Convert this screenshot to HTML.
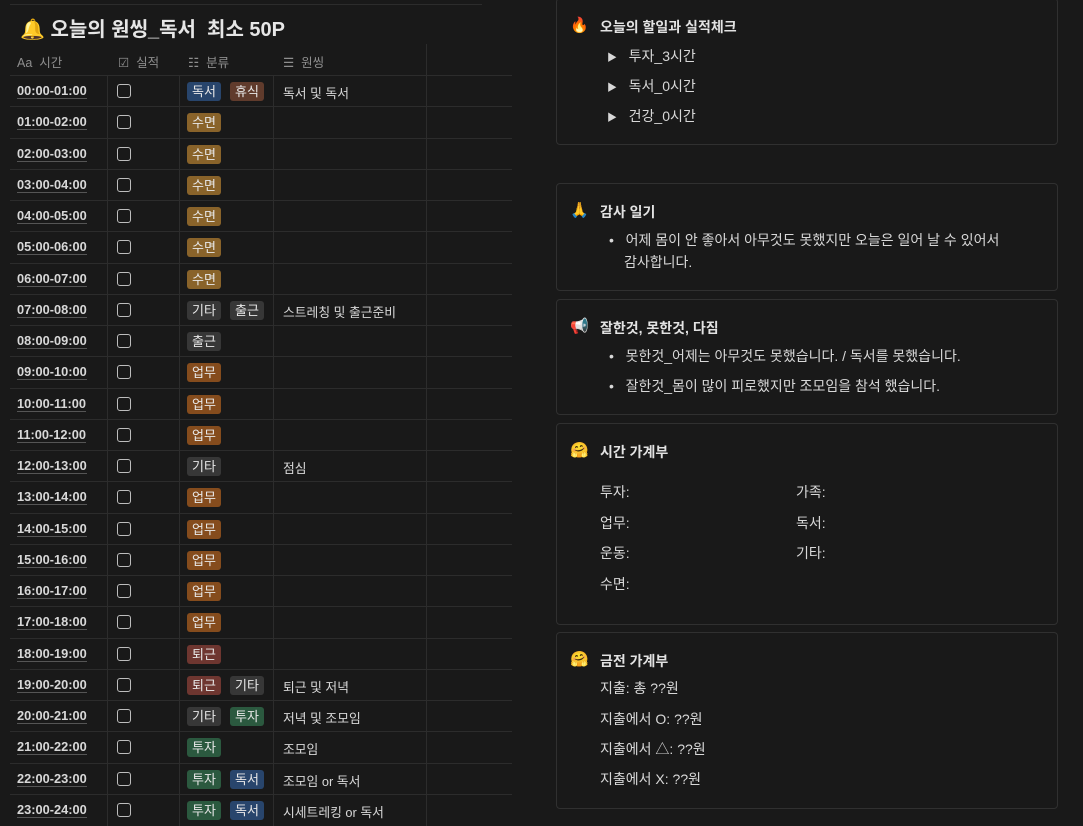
<!DOCTYPE html>
<html><head><meta charset="utf-8">
<style>
*{margin:0;padding:0;box-sizing:border-box}
body{width:1083px;height:826px;background:#191919;overflow:hidden;position:relative;font-family:"Liberation Sans","Noto Sans CJK KR",sans-serif;color:#d4d4d4;font-size:13px}
.a{position:absolute;white-space:nowrap}
.title{left:20px;top:13px;font-size:20px;font-weight:bold;color:#e6e6e6}
.hd{top:52px;color:#8e8e8e;font-size:12.5px}
.row{position:absolute;left:10px;width:502px;height:31.25px;border-top:1px solid #2c2c2c}
.t{position:absolute;left:7px;top:7px;font-weight:bold;font-size:12.8px;color:#d8d8d8;border-bottom:1px solid #555;line-height:15px}
.cb{position:absolute;left:107px;top:8px;width:14px;height:14px;border:1.5px solid #bdbdbd;border-radius:3px}
.tg{position:absolute;top:6px;height:19px;line-height:19px;padding:0 5px;border-radius:3px;font-size:13px;color:#e8e8e8}
.tg1{left:177px}.tg2{left:220px}
.w{position:absolute;left:273px;top:7px;font-size:12.8px;color:#d8d8d8}
.vl{position:absolute;width:1px;background:#2c2c2c}
.b{background:#28456c}.br{background:#603b2c}.s{background:#89632a}.g{background:#373737}.o{background:#854c1d}.r{background:#6e3630}.gr{background:#2b593f}
.box{position:absolute;left:556px;width:502px;border:1px solid #303030;border-radius:4px}
.bt{font-weight:bold;font-size:14px;color:#e2e2e2}
.tx{font-size:14px;color:#d8d8d8}
.ic{font-size:15px}
</style></head><body>
<div class="a" style="left:10px;top:4px;width:472px;height:1px;background:#2c2c2c"></div>
<div class="a title">🔔 오늘의 원씽_독서&nbsp; 최소 50P</div>
<div class="a hd" style="left:17px">Aa&nbsp; 시간</div>
<div class="a hd" style="left:118px">☑&nbsp; 실적</div>
<div class="a hd" style="left:188px">☷&nbsp; 분류</div>
<div class="a hd" style="left:283px">☰&nbsp; 원씽</div>
<div class="vl" style="left:426px;top:44px;height:782px"></div>
<div class="vl" style="left:107px;top:76px;height:750px"></div>
<div class="vl" style="left:179px;top:76px;height:750px"></div>
<div class="vl" style="left:273px;top:76px;height:750px"></div>

<div class="row" style="top:75px"><span class="t">00:00-01:00</span><span class="cb"></span><span class="tg tg1 b">독서</span><span class="tg tg2 br">휴식</span><span class="w">독서 및 독서</span></div>
<div class="row" style="top:106.25px"><span class="t">01:00-02:00</span><span class="cb"></span><span class="tg tg1 s">수면</span></div>
<div class="row" style="top:137.5px"><span class="t">02:00-03:00</span><span class="cb"></span><span class="tg tg1 s">수면</span></div>
<div class="row" style="top:168.75px"><span class="t">03:00-04:00</span><span class="cb"></span><span class="tg tg1 s">수면</span></div>
<div class="row" style="top:200px"><span class="t">04:00-05:00</span><span class="cb"></span><span class="tg tg1 s">수면</span></div>
<div class="row" style="top:231.25px"><span class="t">05:00-06:00</span><span class="cb"></span><span class="tg tg1 s">수면</span></div>
<div class="row" style="top:262.5px"><span class="t">06:00-07:00</span><span class="cb"></span><span class="tg tg1 s">수면</span></div>
<div class="row" style="top:293.75px"><span class="t">07:00-08:00</span><span class="cb"></span><span class="tg tg1 g">기타</span><span class="tg tg2 g">출근</span><span class="w">스트레칭 및 출근준비</span></div>
<div class="row" style="top:325px"><span class="t">08:00-09:00</span><span class="cb"></span><span class="tg tg1 g">출근</span></div>
<div class="row" style="top:356.25px"><span class="t">09:00-10:00</span><span class="cb"></span><span class="tg tg1 o">업무</span></div>
<div class="row" style="top:387.5px"><span class="t">10:00-11:00</span><span class="cb"></span><span class="tg tg1 o">업무</span></div>
<div class="row" style="top:418.75px"><span class="t">11:00-12:00</span><span class="cb"></span><span class="tg tg1 o">업무</span></div>
<div class="row" style="top:450px"><span class="t">12:00-13:00</span><span class="cb"></span><span class="tg tg1 g">기타</span><span class="w">점심</span></div>
<div class="row" style="top:481.25px"><span class="t">13:00-14:00</span><span class="cb"></span><span class="tg tg1 o">업무</span></div>
<div class="row" style="top:512.5px"><span class="t">14:00-15:00</span><span class="cb"></span><span class="tg tg1 o">업무</span></div>
<div class="row" style="top:543.75px"><span class="t">15:00-16:00</span><span class="cb"></span><span class="tg tg1 o">업무</span></div>
<div class="row" style="top:575px"><span class="t">16:00-17:00</span><span class="cb"></span><span class="tg tg1 o">업무</span></div>
<div class="row" style="top:606.25px"><span class="t">17:00-18:00</span><span class="cb"></span><span class="tg tg1 o">업무</span></div>
<div class="row" style="top:637.5px"><span class="t">18:00-19:00</span><span class="cb"></span><span class="tg tg1 r">퇴근</span></div>
<div class="row" style="top:668.75px"><span class="t">19:00-20:00</span><span class="cb"></span><span class="tg tg1 r">퇴근</span><span class="tg tg2 g">기타</span><span class="w">퇴근 및 저녁</span></div>
<div class="row" style="top:700px"><span class="t">20:00-21:00</span><span class="cb"></span><span class="tg tg1 g">기타</span><span class="tg tg2 gr">투자</span><span class="w">저녁 및 조모임</span></div>
<div class="row" style="top:731.25px"><span class="t">21:00-22:00</span><span class="cb"></span><span class="tg tg1 gr">투자</span><span class="w">조모임</span></div>
<div class="row" style="top:762.5px"><span class="t">22:00-23:00</span><span class="cb"></span><span class="tg tg1 gr">투자</span><span class="tg tg2 b">독서</span><span class="w">조모임 or 독서</span></div>
<div class="row" style="top:793.75px"><span class="t">23:00-24:00</span><span class="cb"></span><span class="tg tg1 gr">투자</span><span class="tg tg2 b">독서</span><span class="w">시세트레킹 or 독서</span></div>

<div class="box" style="top:-2px;height:147px"></div>
<div class="a ic" style="left:570px;top:16px">🔥</div>
<div class="a bt" style="left:600px;top:17px">오늘의 할일과 실적체크</div>
<div class="a tx" style="left:607px;top:46px"><span style="font-size:10px">▶</span>&nbsp;&nbsp; 투자_3시간</div>
<div class="a tx" style="left:607px;top:76px"><span style="font-size:10px">▶</span>&nbsp;&nbsp; 독서_0시간</div>
<div class="a tx" style="left:607px;top:106px"><span style="font-size:10px">▶</span>&nbsp;&nbsp; 건강_0시간</div>

<div class="box" style="top:183px;height:108px"></div>
<div class="a ic" style="left:570px;top:201px">🙏</div>
<div class="a bt" style="left:600px;top:202px">감사 일기</div>
<div class="a tx" style="left:609px;top:230px">•&nbsp;&nbsp; 어제 몸이 안 좋아서 아무것도 못했지만 오늘은 일어 날 수 있어서</div>
<div class="a tx" style="left:624px;top:252px">감사합니다.</div>

<div class="box" style="top:299px;height:116px"></div>
<div class="a ic" style="left:570px;top:317px">📢</div>
<div class="a bt" style="left:600px;top:318px">잘한것, 못한것, 다짐</div>
<div class="a tx" style="left:609px;top:346px">•&nbsp;&nbsp; 못한것_어제는 아무것도 못했습니다. / 독서를 못했습니다.</div>
<div class="a tx" style="left:609px;top:376px">•&nbsp;&nbsp; 잘한것_몸이 많이 피로했지만 조모임을 참석 했습니다.</div>

<div class="box" style="top:423px;height:202px"></div>
<div class="a ic" style="left:570px;top:441px">🤗</div>
<div class="a bt" style="left:600px;top:442px">시간 가계부</div>
<div class="a tx" style="left:600px;top:482px">투자:</div>
<div class="a tx" style="left:796px;top:482px">가족:</div>
<div class="a tx" style="left:600px;top:513px">업무:</div>
<div class="a tx" style="left:796px;top:513px">독서:</div>
<div class="a tx" style="left:600px;top:543px">운동:</div>
<div class="a tx" style="left:796px;top:543px">기타:</div>
<div class="a tx" style="left:600px;top:574px">수면:</div>

<div class="box" style="top:632px;height:177px"></div>
<div class="a ic" style="left:570px;top:650px">🤗</div>
<div class="a bt" style="left:600px;top:651px">금전 가계부</div>
<div class="a tx" style="left:600px;top:678px">지출: 총 ??원</div>
<div class="a tx" style="left:600px;top:709px">지출에서 O: ??원</div>
<div class="a tx" style="left:600px;top:739px">지출에서 △: ??원</div>
<div class="a tx" style="left:600px;top:769px">지출에서 X: ??원</div>
</body></html>
